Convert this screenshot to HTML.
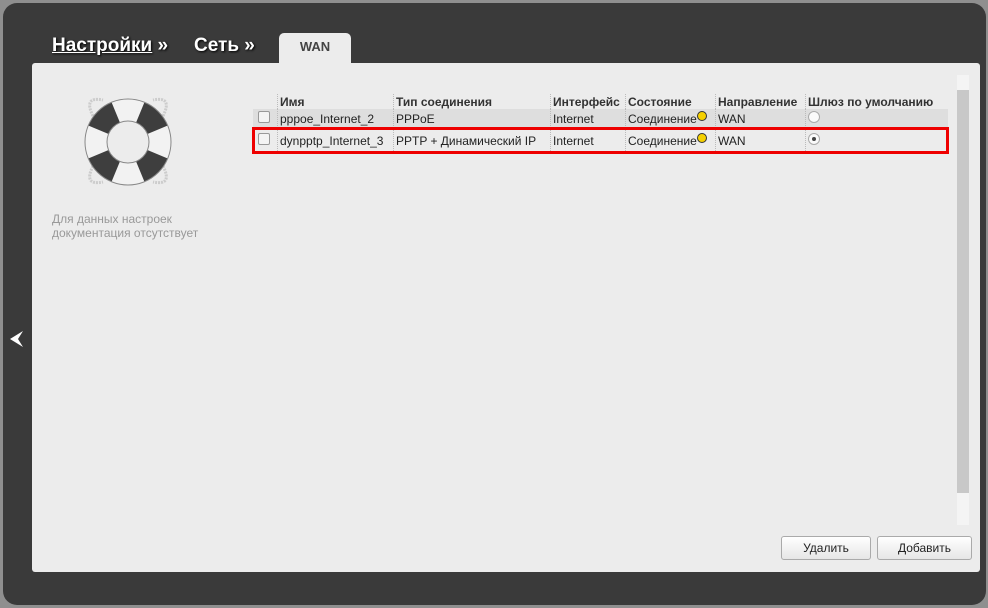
<!DOCTYPE html><html><head><meta charset="utf-8"><style>
body{margin:0;width:988px;height:608px;background:#8f8f8f;font-family:"Liberation Sans",sans-serif;position:relative;overflow:hidden}
.dark{position:absolute;left:3px;top:3px;width:983px;height:602px;background:#3a3a3a;border-radius:14px}
.light{position:absolute;left:32px;top:63px;width:948px;height:509px;background:#ececec;border-radius:3px}
.bc{position:absolute;top:35px;color:#fff;font-size:19px;font-weight:bold;text-shadow:1px 1px 2px #000}
.tab{position:absolute;left:279px;top:33px;width:72px;height:31px;background:#ececec;border-radius:5px 5px 0 0;text-align:center;font-size:13px;font-weight:bold;color:#444;line-height:28px}
table{position:absolute;left:253px;top:94px;border-collapse:collapse;font-size:12px;color:#222}
td,th{padding:0 2px;height:19px;text-align:left;border-left:1px dotted #bbb}
th{font-weight:bold;color:#333;height:15px}
.cb{width:10px;height:10px;border:1px solid #999;border-radius:2px;background:#f4f4f4;display:inline-block;margin-left:3px}
.dot{display:inline-block;width:8px;height:8px;border-radius:50%;background:#f5d000;border:1px solid #333;vertical-align:2px}
.rad{display:inline-block;width:10px;height:10px;border-radius:50%;border:1px solid #aaa;background:#fafafa;position:relative}
.btn{position:absolute;top:536px;height:22px;border:1px solid #aaa;border-radius:3px;background:linear-gradient(#fff,#e6e6e6);font-size:12px;text-align:center;line-height:22px;color:#222}
</style></head><body>
<div class="dark"></div>
<div class="bc" style="left:52px"><span style="text-decoration:underline">Настройки</span> »</div>
<div class="bc" style="left:194px">Сеть »</div>
<div class="tab">WAN</div>
<div class="light"></div>
<div style="position:absolute;left:957px;top:75px;width:12px;height:450px;background:#f4f4f4"><div style="margin-top:15px;height:403px;background:#c8c8c8"></div></div>
<svg style="position:absolute;left:10px;top:331px" width="14" height="16" viewBox="0 0 14 16"><path d="M13 0 L0 8 L13 16 L8 8 Z" fill="#fff"/></svg>
<svg style="position:absolute;left:73px;top:86px" width="110" height="110" viewBox="0 0 110 110">
<path d="M20 30 Q10 10 30 14 M90 30 Q100 10 80 14 M20 80 Q10 100 30 96 M90 80 Q100 100 80 96" fill="none" stroke="#ccc" stroke-width="3" stroke-dasharray="2 1"/>
<circle cx="55" cy="56" r="32" fill="none" stroke="#f2f2f2" stroke-width="22"/>
<circle cx="55" cy="56" r="32" fill="none" stroke="#3e3e3e" stroke-width="22" pathLength="8" stroke-dasharray="1 1" transform="rotate(22.5 55 56)"/>
<circle cx="55" cy="56" r="43" fill="none" stroke="#888" stroke-width="1"/>
<circle cx="55" cy="56" r="21" fill="#ececec" stroke="#888"/>
</svg>
<div style="position:absolute;left:52px;top:212px;font-size:12px;color:#999;line-height:14px">Для данных настроек<br>документация отсутствует</div>
<table>
<tr><th style="border:none;width:20px"></th><th style="width:111px">Имя</th><th style="width:152px">Тип соединения</th><th style="width:70px">Интерфейс</th><th style="width:85px">Состояние</th><th style="width:85px">Направление</th><th style="width:138px">Шлюз по умолчанию</th></tr>
<tr style="background:#dedede"><td style="border:none"><span class="cb"></span></td><td>pppoe_Internet_2</td><td>PPPoE</td><td>Internet</td><td>Соединение<span class="dot"></span></td><td>WAN</td><td><span class="rad"></span></td></tr>
<tr style="outline:3px solid #e00;outline-offset:-2px;height:25px"><td style="border:none"><span class="cb"></span></td><td>dynpptp_Internet_3</td><td>PPTP + Динамический IP</td><td>Internet</td><td>Соединение<span class="dot"></span></td><td>WAN</td><td><span class="rad"><span style="position:absolute;left:3px;top:3px;width:4px;height:4px;border-radius:50%;background:#444"></span></span></td></tr>
</table>
<div class="btn" style="left:781px;width:88px">Удалить</div>
<div class="btn" style="left:877px;width:93px">Добавить</div>
</body></html>
